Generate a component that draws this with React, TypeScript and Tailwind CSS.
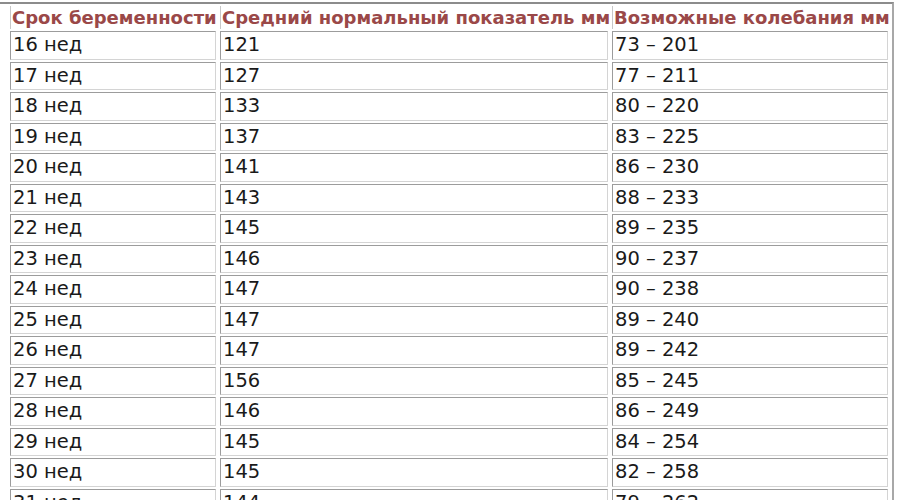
const rows: [string, string, string][] = [
  ['16 нед', '121', '73 – 201'],
  ['17 нед', '127', '77 – 211'],
  ['18 нед', '133', '80 – 220'],
  ['19 нед', '137', '83 – 225'],
  ['20 нед', '141', '86 – 230'],
  ['21 нед', '143', '88 – 233'],
  ['22 нед', '145', '89 – 235'],
  ['23 нед', '146', '90 – 237'],
  ['24 нед', '147', '90 – 238'],
  ['25 нед', '147', '89 – 240'],
  ['26 нед', '147', '89 – 242'],
  ['27 нед', '156', '85 – 245'],
  ['28 нед', '146', '86 – 249'],
  ['29 нед', '145', '84 – 254'],
  ['30 нед', '145', '82 – 258'],
  ['31 нед', '144', '79 – 262'],
];

const cell =
  'border border-t-[#9c9c9c] border-l-[#9c9c9c] border-b-[#d4d4d4] border-r-[#d4d4d4] leading-[26.5px] pl-[2px] pr-[1px] py-0 text-left align-middle';

const head = 'border-l border-l-[#c8c8c8] leading-[23px] px-[1px] py-0 text-left align-middle whitespace-nowrap';

export default function App() {
  return (
    <div className="w-[900px] h-[500px] overflow-hidden bg-white font-['DejaVu_Sans',Verdana,sans-serif]">
      <div className="w-[894px] mt-[2px] border-t-2 border-r-2 border-t-[#8c8c8c] border-r-[#a8a8a8]">
        <table className="ml-[6px] w-[886px] border-separate border-spacing-x-[4px] border-spacing-y-[2px] table-fixed">
          <colgroup>
            <col className="w-[206px]" />
            <col className="w-[388px]" />
            <col className="w-[276px]" />
          </colgroup>
          <thead>
            <tr className="text-[18px] font-bold text-[#9a4848]">
              <th className={head}>Срок беременности</th>
              <th className={head}>Средний нормальный показатель мм</th>
              <th className={head}>Возможные колебания мм</th>
            </tr>
          </thead>
          <tbody className="text-[19.5px] text-[#1a1a1a]">
            {rows.map(([week, avg, range]) => (
              <tr key={week}>
                <td className={cell}>{week}</td>
                <td className={cell}>{avg}</td>
                <td className={cell}>{range}</td>
              </tr>
            ))}
          </tbody>
        </table>
      </div>
    </div>
  );
}
